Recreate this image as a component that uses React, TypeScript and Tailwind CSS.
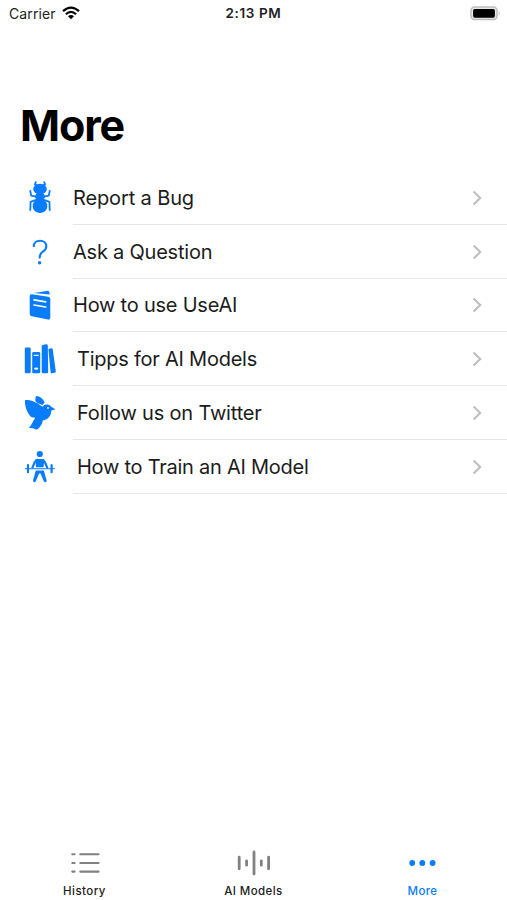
import type { ReactNode } from "react";

type IconProps = { children: ReactNode };

function RowIcon({ children }: IconProps) {
  return (
    <svg
      viewBox="0 0 40 40"
      className="ml-5 h-10 w-10 shrink-0 text-[#087cfb]"
      fill="currentColor"
    >
      {children}
    </svg>
  );
}

const stroke = {
  fill: "none",
  stroke: "currentColor",
  strokeLinecap: "round",
  strokeLinejoin: "round",
} as const;

const AntIcon = () => (
  <RowIcon>
    <ellipse cx="20" cy="11" rx="6.8" ry="5.2" />
    <ellipse cx="20" cy="18.6" rx="5" ry="4" />
    <ellipse cx="20" cy="28" rx="7.4" ry="6.9" />
    <g {...stroke} strokeWidth="1.8">
      <path d="M17.2 7.5 14.9 6.4 15.9 4.2M22.8 7.5 25.1 6.4 24.1 4.2" />
      <path d="M17 18.8 11.2 17.6 10.3 13M23 18.8 28.8 17.6 29.7 13" />
      <path d="M17.5 21.4 10.6 23.8 10.3 32M22.5 21.4 29.4 23.8 29.7 32" />
    </g>
  </RowIcon>
);

const QuestionIcon = () => (
  <RowIcon>
    <path
      {...stroke}
      strokeWidth="2.1"
      d="M13.8 14.2C13.8 10.8 16.3 8.7 20 8.7C23.8 8.7 26.3 11 26.3 14.2C26.3 17 24.8 18.3 22.8 19.7C20.6 21.2 19.7 22.3 19.7 25.6"
    />
    <circle cx="19.6" cy="30.8" r="1.7" />
  </RowIcon>
);

const MagazineIcon = () => (
  <RowIcon>
    <path d="M13.8 8 26.5 5.9Q29.2 5.4 29.5 7.5L29.7 9.6Z" />
    <path d="M11.8 9.3 28.2 11.7Q30.3 12.1 30.3 14.2V32.6Q30.3 34.9 28 34.6L11.8 31.3Q9.7 30.8 9.7 28.7V11.2Q9.7 9 11.8 9.3Z" />
    <path
      {...stroke}
      stroke="white"
      strokeWidth="1.7"
      d="M14 14.9 25.6 16.9M14 20 25.6 22"
    />
  </RowIcon>
);

const BooksIcon = () => (
  <RowIcon>
    <rect x="4.8" y="8.5" width="5.9" height="25.8" rx="1.3" />
    <rect x="12.2" y="13" width="8" height="21.3" rx="1.3" />
    <path d="M22.7 6 26 5.2Q27.6 4.9 27.8 6.5L28.2 32.8Q28.2 34.3 26.7 34.3H23.2Q21.7 34.3 21.7 32.8V7.3Q21.7 6.2 22.7 6Z" />
    <path d="M28.4 9.9 31.3 9.2Q32.5 9 32.7 10.3L35.8 32.2Q35.9 33.5 34.6 33.8L31.8 34.3Q30.8 34.4 30.6 33.2Z" />
    <path {...stroke} stroke="white" strokeWidth="1.1" d="M14.2 16.4H18.2" />
    <ellipse cx="16.2" cy="29.6" rx="2.1" ry="1.2" fill="white" />
  </RowIcon>
);

const BirdIcon = () => (
  <RowIcon>
    <path d="M16.2 3.1C20 3.4 22.8 5.5 24.7 9.2L22.6 12C19.6 11 16.8 9.7 15.6 8.4C15.1 6.6 15.3 4.6 16.2 3.1Z" />
    <path d="M5 7C10.5 6.8 15.5 8.5 22.4 13.7C24.2 10.9 28.5 10.7 31 13.4L35.2 16.2C33.5 16.9 32.3 17 31.3 17.4C31.2 22.5 28.4 26.6 22.8 27.4C22.2 31 19.8 35 16.4 36.7C14.6 35.2 11.6 34.9 8.8 34.9C11.6 32.2 12.6 28.4 15.3 24.7C12 24.7 10 23.8 9.2 21.6C6.6 18.2 4.7 13 5 7Z" />
    <circle cx="28" cy="14.9" r="0.9" fill="white" />
  </RowIcon>
);

const LifterIcon = () => (
  <RowIcon>
    <circle cx="19.8" cy="7" r="3.1" />
    <path d="M16.8 12H22.8Q24.6 12 24.2 14L23.6 20.2H16L15.4 14Q15 12 16.8 12Z" />
    <path
      {...stroke}
      strokeWidth="2.2"
      d="M16.4 13.1 14.6 15.4 12.4 20.6M23.2 13.1 25 15.4 27.2 20.6"
    />
    <path {...stroke} strokeWidth="1.1" d="M5.3 21.8H34.4" />
    <path {...stroke} strokeWidth="2.2" d="M8 18.2V25.2M31.6 18.2V25.2" />
    <path d="M15.8 23.6H23.8L26.7 33.5Q26.9 35.1 25.3 35.2Q24.1 35.2 23.7 34L20.5 26.5H19.1L15.9 34Q15.4 35.3 14.2 35.1Q12.7 34.8 13 33.5Z" />
  </RowIcon>
);

const rows = [
  { label: "Report a Bug", icon: <AntIcon />, text: "ml-[13px] tracking-[-0.13px]" },
  { label: "Ask a Question", icon: <QuestionIcon />, text: "ml-[13px] tracking-[-0.22px]" },
  { label: "How to use UseAI", icon: <MagazineIcon />, text: "ml-[13px] tracking-[-0.22px]" },
  { label: "Tipps for AI Models", icon: <BooksIcon />, text: "ml-[17px] tracking-[-0.24px]" },
  { label: "Follow us on Twitter", icon: <BirdIcon />, text: "ml-[17px] tracking-[-0.18px]" },
  { label: "How to Train an AI Model", icon: <LifterIcon />, text: "ml-[17px] tracking-[-0.25px]" },
];

function StatusBar() {
  return (
    <header className="grid h-[26px] grid-cols-3 items-center text-[14px] text-[#222]">
      <div className="flex items-center gap-1.5 pl-[9px]">
        <span className="tracking-[0.1px]">Carrier</span>
        <svg viewBox="0 0 18 14" className="h-3.5 w-[18px] text-black" fill="none" stroke="currentColor">
          <path d="M1 5.2Q9-2 17 5.2" strokeWidth="2.3" />
          <path d="M3.9 8.2Q9 3.7 14.1 8.2" strokeWidth="2.2" />
          <path d="M6 10.2Q9 7.8 12 10.2L9 13.3Z" fill="currentColor" stroke="none" />
        </svg>
      </div>
      <span className="text-center text-[13.5px] font-semibold tracking-[0.6px]">2:13 PM</span>
      <div className="flex justify-end pr-[6px]">
        <svg viewBox="0 0 31 15" className="h-[15px] w-[31px]">
          <rect x="1" y="1" width="26" height="12.6" rx="3.6" fill="#e8e8e8" stroke="#bdbdbd" strokeWidth="1.5" />
          <rect x="3.1" y="2.9" width="21.8" height="8.8" rx="1.6" fill="black" />
          <path d="M28.7 5.2Q30.8 7.3 28.7 9.4Z" fill="#bdbdbd" />
        </svg>
      </div>
    </header>
  );
}

function TabBar() {
  return (
    <nav className="grid h-[55px] grid-cols-3 text-center text-[11.5px] font-medium text-[#222]">
      <div className="flex flex-col items-center">
        <svg viewBox="0 0 30 36" className="h-9 w-[30px] text-[#808080]" {...stroke} strokeWidth="2.1">
          <path d="M2.3 9.3H4.6M10.3 9.3H28.5M2.3 18H4.6M10.3 18H28.5M2.3 26.6H4.6M10.3 26.6H28.5" />
        </svg>
        <span className="pt-px leading-[18px] tracking-[0.45px]">History</span>
      </div>
      <div className="flex flex-col items-center">
        <svg viewBox="0 0 36 36" className="h-9 w-9 text-[#808080]" {...stroke} strokeWidth="2.8">
          <path d="M3.2 12.2V23.8M10.6 16V20.2M18 7V29M25.3 16V20.2M32.6 12.2V23.8" />
        </svg>
        <span className="pt-px leading-[18px] tracking-[0.4px]">AI Models</span>
      </div>
      <div className="flex flex-col items-center text-[#087cfb]">
        <svg viewBox="0 0 28 36" className="h-9 w-7" fill="currentColor">
          <circle cx="3.2" cy="18" r="2.9" />
          <circle cx="13.3" cy="18" r="2.9" />
          <circle cx="23.6" cy="18" r="2.9" />
        </svg>
        <span className="pt-px leading-[18px] tracking-[0.4px]">More</span>
      </div>
    </nav>
  );
}

export default function App() {
  return (
    <div className="flex h-[900px] w-[507px] flex-col overflow-hidden bg-white font-['Inter',sans-serif]">
      <StatusBar />
      <h1 className="mt-[69px] ml-5 h-[76px] text-[43px] leading-[60px] font-bold tracking-[-1.1px] text-black">
        More
      </h1>
      <ul>
        {rows.map((row) => (
          <li key={row.label} className="flex h-[53.75px] items-center">
            {row.icon}
            <div className="relative flex h-full flex-1 items-center">
              <span className={`text-[20px] whitespace-nowrap text-[#1c1c1c] ${row.text}`}>
                {row.label}
              </span>
              <svg
                viewBox="0 0 12 18"
                className="mr-[24px] ml-auto h-[18px] w-3 text-[#bebebe]"
                {...stroke}
                strokeWidth="2.1"
                strokeLinecap="butt"
                strokeLinejoin="miter"
              >
                <path d="M2.6 2.4 9.2 9 2.6 15.6" />
              </svg>
              <div className="absolute right-0 bottom-0 left-[13px] h-px bg-[#e6e6e6]" />
            </div>
          </li>
        ))}
      </ul>
      <div className="flex-1" />
      <TabBar />
    </div>
  );
}
